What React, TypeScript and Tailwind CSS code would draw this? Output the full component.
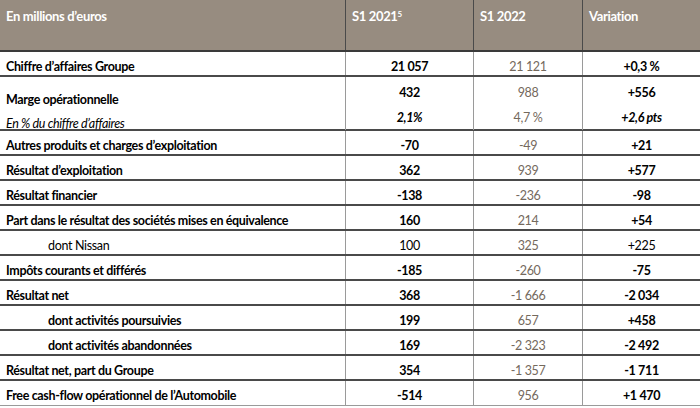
const rows = [
  { label: "Chiffre d’affaires Groupe", a: "21 057", b: "21 121", c: "+0,3 %", kind: "bold" },
  { label: "Autres produits et charges d’exploitation", a: "-70", b: "-49", c: "+21", kind: "bold" },
  { label: "Résultat d’exploitation", a: "362", b: "939", c: "+577", kind: "bold" },
  { label: "Résultat financier", a: "-138", b: "-236", c: "-98", kind: "bold" },
  { label: "Part dans le résultat des sociétés mises en équivalence", a: "160", b: "214", c: "+54", kind: "bold" },
  { label: "dont Nissan", a: "100", b: "325", c: "+225", kind: "sub" },
  { label: "Impôts courants et différés", a: "-185", b: "-260", c: "-75", kind: "bold" },
  { label: "Résultat net", a: "368", b: "-1 666", c: "-2 034", kind: "bold" },
  { label: "dont activités poursuivies", a: "199", b: "657", c: "+458", kind: "subbold" },
  { label: "dont activités abandonnées", a: "169", b: "-2 323", c: "-2 492", kind: "subbold" },
  { label: "Résultat net, part du Groupe", a: "354", b: "-1 357", c: "-1 711", kind: "bold" },
  { label: "Free cash-flow opérationnel de l’Automobile", a: "-514", b: "956", c: "+1 470", kind: "bold" },
];

const grid = "grid grid-cols-[345px_128px_109px_118px]";

function Row({ r, last }: { r: (typeof rows)[number]; last: boolean }) {
  const weight = r.kind === "sub" ? "font-normal" : "font-bold";
  const indent = r.kind === "bold" ? "pl-[6px]" : "pl-[48px]";
  return (
    <div
      className={`${grid} h-[25px] ${
        last ? "border-b border-[#9a9a9a]" : "border-b-2 border-[#4a4a4a]"
      }`}
    >
      <div className={`${indent} ${weight} pt-[9px] text-black`}>{r.label}</div>
      <div className={`${weight} pt-[9px] text-center border-l border-[#9a9a9a] text-black`}>
        {r.a}
      </div>
      <div className="pt-[9px] text-center border-l border-[#9a9a9a] text-[#74695d]">
        {r.b}
      </div>
      <div className={`${weight} pt-[9px] text-center border-l border-[#9a9a9a] text-black`}>
        {r.c}
      </div>
    </div>
  );
}

export default function App() {
  const [first, ...rest] = rows;
  return (
    <div className="w-[700px] h-[408px] bg-white overflow-hidden font-['Lato',sans-serif] text-[12.5px] tracking-[-0.35px] leading-none">
      {/* header */}
      <div className={`${grid} h-[52px] bg-[#978c80] text-white text-[13px] font-bold border-b-2 border-[#3a3a3a]`}>
        <div className="pl-[6px] pt-[10px]">En millions d’euros</div>
        <div className="pl-[6px] pt-[10px] border-l border-[#4a4a4a]">
          S1 2021<sup className="text-[8px]">5</sup>
        </div>
        <div className="pl-[6px] pt-[10px] border-l border-[#4a4a4a]">S1 2022</div>
        <div className="pl-[6px] pt-[10px] border-l border-[#4a4a4a]">Variation</div>
      </div>

      <Row r={first} last={false} />

      {/* marge opérationnelle, two lines */}
      <div className={`${grid} h-[54px] border-b-2 border-[#4a4a4a]`}>
        <div className="pl-[6px] pt-[17px] flex flex-col gap-[11px]">
          <span className="font-bold">Marge opérationnelle</span>
          <span className="italic">En % du chiffre d’affaires</span>
        </div>
        <div className="pt-[10px] flex flex-col items-center gap-[12px] border-l border-[#9a9a9a] font-bold">
          <span>432</span>
          <span className="italic">2,1%</span>
        </div>
        <div className="pt-[10px] flex flex-col items-center gap-[12px] border-l border-[#9a9a9a] text-[#74695d]">
          <span>988</span>
          <span>4,7 %</span>
        </div>
        <div className="pt-[10px] flex flex-col items-center gap-[12px] border-l border-[#9a9a9a] font-bold">
          <span>+556</span>
          <span className="italic">+2,6 pts</span>
        </div>
      </div>

      {rest.map((r, i) => (
        <Row key={r.label} r={r} last={i === rest.length - 1} />
      ))}
    </div>
  );
}
